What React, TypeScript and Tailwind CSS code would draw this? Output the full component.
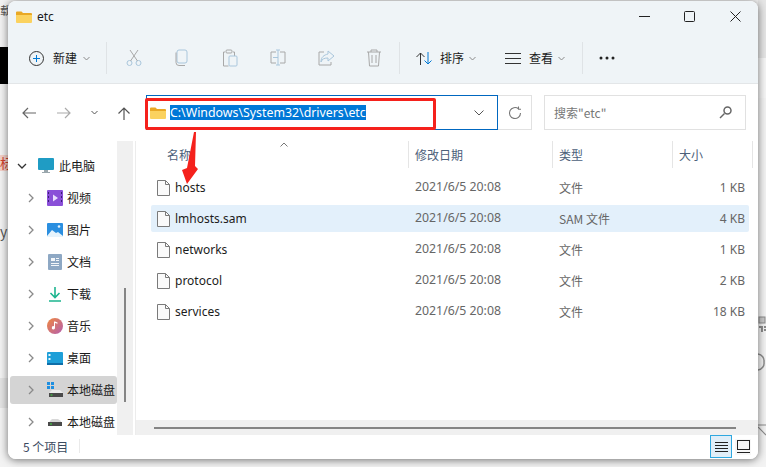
import React from "react";

const font = { fontFamily: '"Noto Sans CJK SC", sans-serif' };
const latin = { fontFamily: '"Noto Sans", sans-serif' };

function FolderIcon({ s = 16 }: { s?: number }) {
  return (
    <svg width={s} height={s} viewBox="0 0 16 16">
      <path d="M0 3.5a1 1 0 0 1 1-1h4.5l1.5 1.5h8a1 1 0 0 1 1 1v1H0z" fill="#e9a825" />
      <path d="M0 6h16v7a1 1 0 0 1-1 1H1a1 1 0 0 1-1-1z" fill="#fbd25f" />
    </svg>
  );
}

function FileIcon() {
  return (
    <svg width="13" height="16" viewBox="0 0 13 16" fill="#fafafa" stroke="#7a7a7a">
      <path d="M.5.5h8l4 4v11H.5z" />
      <path d="M8.5.5v4h4" fill="none" />
    </svg>
  );
}

function Chevron({ open = false }: { open?: boolean }) {
  return (
    <svg width="10" height="10" viewBox="0 0 10 10" fill="none" stroke={open ? "#333" : "#8a8a8a"} strokeWidth="1.3">
      {open ? <path d="M1 3l4 4 4-4" /> : <path d="M3 1l4 4-4 4" />}
    </svg>
  );
}

function Caret() {
  return (
    <svg width="7" height="5" viewBox="0 0 7 5" fill="none" stroke="#8a8a8a">
      <path d="M.5 1l3 3 3-3" />
    </svg>
  );
}

function Sep() {
  return <div className="w-px h-[32px] bg-[#dfe3e6]" />;
}

function ToolIcon({ children }: { children: React.ReactNode }) {
  return (
    <svg width="18" height="18" viewBox="0 0 18 18" fill="none" stroke="#a9c6dc" strokeWidth="1">
      {children}
    </svg>
  );
}

const nav: { label: string; icon: React.ReactNode; active?: boolean }[] = [
  {
    label: "视频",
    icon: (
      <svg width="16" height="16" viewBox="0 0 16 16">
        <rect width="16" height="16" rx="1" fill="#8a4fd8" />
        <path d="M6 4.5l5 3.5-5 3.5z" fill="#e9dcff" />
        <path d="M1 2h1v2H1zM1 6h1v2H1zM1 10h1v2H1zM14 2h1v2h-1zM14 6h1v2h-1zM14 10h1v2h-1z" fill="#3c1d78" />
      </svg>
    ),
  },
  {
    label: "图片",
    icon: (
      <svg width="16" height="16" viewBox="0 0 16 16">
        <rect width="16" height="14" y="1" rx="1" fill="#2b8fe0" />
        <path d="M0 14l5-6 4 3 2-1 5 4v1H0z" fill="#e6f3fc" />
        <circle cx="12" cy="4.5" r="1.3" fill="#e6f3fc" />
      </svg>
    ),
  },
  {
    label: "文档",
    icon: (
      <svg width="14" height="16" viewBox="0 0 14 16">
        <rect width="14" height="16" rx="1" fill="#8ea8c4" />
        <path d="M3 4h4v3H3zM8 4h3v1H8zM8 6h3v1H8zM3 9h8v1H3zM3 11h8v1H3z" fill="#f3f6f9" />
      </svg>
    ),
  },
  {
    label: "下载",
    icon: (
      <svg width="14" height="16" viewBox="0 0 14 16" fill="none" stroke="#1db58f" strokeWidth="1.6">
        <path d="M7 1v10M2.5 7L7 11.5 11.5 7M1 15h12" />
      </svg>
    ),
  },
  {
    label: "音乐",
    icon: (
      <svg width="16" height="16" viewBox="0 0 16 16">
        <defs>
          <linearGradient id="m" x1="0" y1="0" x2="1" y2="1">
            <stop offset="0" stopColor="#f0883e" />
            <stop offset="1" stopColor="#b45fb0" />
          </linearGradient>
        </defs>
        <circle cx="8" cy="8" r="8" fill="url(#m)" />
        <path d="M8 3.5v6.2a1.6 1.6 0 1 1-1-1.4V3.5zM8 3.5l2.5 1v1.3L8 5z" fill="#fff" />
      </svg>
    ),
  },
  {
    label: "桌面",
    icon: (
      <svg width="16" height="13" viewBox="0 0 16 13">
        <rect width="16" height="12" rx="1" fill="#1e9fd8" />
        <rect y="11" width="16" height="2" fill="#0f6ea8" />
        <path d="M1.5 2h2v2h-2zM1.5 6h2v2h-2z" fill="#e6f6fc" />
      </svg>
    ),
  },
  {
    label: "本地磁盘",
    active: true,
    icon: (
      <svg width="16" height="16" viewBox="0 0 16 16">
        <path d="M0 0h3v3H0zM4 0h3v3H4zM0 4h3v3H0zM4 4h3v3H4z" fill="#1f8fe0" />
        <path d="M3 10l2-2h8l3 3v1H2z" fill="#ececec" />
        <rect x="2" y="11" width="14" height="4" fill="#4a4a4a" />
        <rect x="3.5" y="12.5" width="2" height="1" fill="#3fdc3f" />
      </svg>
    ),
  },
  {
    label: "本地磁盘",
    icon: (
      <svg width="16" height="16" viewBox="0 0 16 16">
        <path d="M3 7l2-2h6l3 2v2H2z" fill="#d8d8d8" />
        <rect x="1" y="8" width="14" height="4" fill="#4a4a4a" />
        <rect x="3" y="9.5" width="2" height="1" fill="#3fdc3f" />
      </svg>
    ),
  },
];

const files = [
  { name: "hosts", type: "文件", size: "1 KB" },
  { name: "lmhosts.sam", type: "SAM 文件", size: "4 KB", sel: true },
  { name: "networks", type: "文件", size: "1 KB" },
  { name: "protocol", type: "文件", size: "2 KB" },
  { name: "services", type: "文件", size: "18 KB" },
];

export default function App() {
  return (
    <div className="relative w-[766px] h-[467px] overflow-hidden bg-[#f3f3f3] text-[12px] text-[#1a1a1a]" style={font}>
      {/* backdrop */}
      <div className="absolute left-0 top-[47px] w-[8px] h-[37px] bg-black" />
      <div className="absolute left-0 top-0 text-[11px] text-[#555] leading-[20px]">载</div>
      <div className="absolute left-0 top-[155px] text-[13px] text-[#d0402c] bg-[#f4d0c8] leading-[16px]">标</div>
      <div className="absolute left-0 top-[221px] text-[14px] text-[#555]">y</div>
      <div className="absolute left-0 top-[378px] w-[8px] h-[30px] bg-[#e4e4e4]" />
      <div className="absolute right-0 top-0 w-[8px] h-[58px] bg-[#e6e6e6]" />
      <div className="absolute right-0 top-[58px] w-[8px] h-[40px] bg-[#f6f6f6]" />
      <svg className="absolute left-[758px] top-[315px]" width="8" height="125" viewBox="0 0 8 125" fill="none" stroke="#8b8b8b">
        <rect x="1" y="2" width="6" height="6" fill="#c9c9c9" />
        <path d="M1 12h3v5M6 12h2M6 15h2" strokeWidth="2" />
        <path d="M0 39a7 7 0 0 1 6 8 7 7 0 0 1-6 8" strokeWidth="1.500" />
        <path d="M0 110h8M0 112l8 8" strokeWidth="1.200" />
      </svg>

      {/* window */}
      <div className="absolute left-[8px] top-[1px] w-[750px] h-[458px] rounded-[8px] bg-white shadow-[0_1px_9px_rgba(0,0,0,0.55)] overflow-hidden flex flex-col">
        {/* title + toolbar */}
        <div className="h-[83px] shrink-0 bg-[#eff4f7] border-b border-[#e3e6e8] flex flex-col">
          <div className="h-[32px] flex items-center pl-[8px] pb-[1px]">
            <FolderIcon />
            <span className="ml-[5px] text-[12px]" style={latin}>etc</span>
            <div className="ml-auto flex items-center">
              <svg className="mr-[34px]" width="11" height="11" viewBox="0 0 11 11" stroke="#222"><path d="M0 5.5h11" /></svg>
              <svg className="mr-[35px]" width="11" height="11" viewBox="0 0 11 11" fill="none" stroke="#222"><rect x=".5" y=".5" width="10" height="10" rx="1" /></svg>
              <svg className="mr-[17px]" width="11" height="11" viewBox="0 0 11 11" stroke="#222"><path d="M.5.5l10 10M10.5.5l-10 10" /></svg>
            </div>
          </div>
          <div className="flex items-center h-[50px] pl-[21px]">
            <svg width="15" height="15" viewBox="0 0 15 15" fill="none">
              <circle cx="7.5" cy="7.5" r="7" stroke="#333" />
              <path d="M7.5 4v7M4 7.5h7" stroke="#0078d4" />
            </svg>
            <span className="ml-[9px] mr-[6px]">新建</span>
            <Caret />
            <div className="ml-[16px] mr-[18px]"><Sep /></div>
            <div className="flex items-center gap-[30px]">
              <ToolIcon><circle cx="4.5" cy="14" r="2.5" /><circle cx="13.5" cy="14" r="2.5" /><path d="M5.5 12L13 1M12.5 12L5 1" stroke="#a8a8a8" /></ToolIcon>
              <ToolIcon><rect x="4" y="1" width="10" height="13" rx="2" /><path d="M3 3.5v10a3 3 0 0 0 3 3h6" stroke="#a8a8a8" /></ToolIcon>
              <ToolIcon><path d="M4 3H2.5v14h5M12 3h1.500v4" stroke="#a8a8a8" /><rect x="5" y="1" width="6" height="3" rx="1" stroke="#a8a8a8" /><rect x="8" y="7" width="8" height="10" rx="1" /></ToolIcon>
              <ToolIcon><path d="M7 3H2v11h5M11 3h5v11h-5" stroke="#a8a8a8" /><path d="M9 1v15M7 1h4M7 16h4M4 8.500h5" /></ToolIcon>
              <ToolIcon><path d="M11 2l6 5-6 5V9c-4 0-6 1-7 4 0-5 3-7 7-8z" /><path d="M7 3H2v13h12v-3" stroke="#a8a8a8" /></ToolIcon>
              <ToolIcon><path d="M2 3h14M6 3V1h6v2M3.500 3l1 14h9l1-14M7 6v8M11 6v8" stroke="#a8a8a8" /></ToolIcon>
            </div>
            <div className="ml-[16px] mr-[16px]"><Sep /></div>
            <svg width="17" height="13" viewBox="0 0 17 13" fill="none">
              <path d="M4.500 13V1M.5 5l4-4 4 4" stroke="#333" />
              <path d="M12 0v12M8.500 8.500l3.500 3.500 3.500-3.500" stroke="#0078d4" />
            </svg>
            <span className="ml-[7px] mr-[5px]">排序</span>
            <Caret />
            <svg className="ml-[29px]" width="16" height="11" viewBox="0 0 16 11" stroke="#333"><path d="M0 .5h16M0 5.500h16M0 10.500h16" /></svg>
            <span className="ml-[8px] mr-[5px]">查看</span>
            <Caret />
            <div className="ml-[17px] mr-[16px]"><Sep /></div>
            <svg width="16" height="4" viewBox="0 0 16 4" fill="#222"><circle cx="2" cy="2" r="1.500" /><circle cx="8" cy="2" r="1.500" /><circle cx="14" cy="2" r="1.500" /></svg>
          </div>
        </div>

        {/* address row */}
        <div className="h-[57px] shrink-0 flex items-center relative">
          <div className="flex items-center w-[138px] pl-[13px]">
            <svg width="16" height="14" viewBox="0 0 16 14" fill="none" stroke="#666" strokeWidth="1.200"><path d="M15 7H2M7 2L2 7l5 5" /></svg>
            <svg className="ml-[19px]" width="16" height="14" viewBox="0 0 16 14" fill="none" stroke="#aaa" strokeWidth="1.200"><path d="M1 7h13M9 2l5 5-5 5" /></svg>
            <svg className="ml-[19px]" width="7" height="5" viewBox="0 0 7 5" fill="none" stroke="#555"><path d="M.5 1l3 3 3-3" /></svg>
            <svg className="ml-[19px]" width="14" height="14" viewBox="0 0 14 14" fill="none" stroke="#555" strokeWidth="1.200"><path d="M7 14V2M1.500 7.500L7 2l5.500 5.500" /></svg>
          </div>
          <div className="w-[352px] h-[35px] border border-[#0067c0] flex items-center pl-[3px] pr-[13px]">
            <FolderIcon />
            <span className="ml-[4px] bg-[#0078d7] text-white leading-[15px] text-[12.35px]" style={latin}>C:\Windows\System32\drivers\etc</span>
            <svg className="ml-auto" width="10" height="6" viewBox="0 0 10 6" fill="none" stroke="#555"><path d="M.5.5L5 5 9.500.5" /></svg>
          </div>
          <div className="w-[34px] h-[35px] border border-l-0 border-[#e1e1e1] flex items-center justify-center">
            <svg width="14" height="14" viewBox="0 0 14 14" fill="none" stroke="#777" strokeWidth="1.100"><path d="M12.500 7A5.500 5.500 0 1 1 10.500 2.800M10.500.5v2.800H13" /></svg>
          </div>
          <div className="ml-[12px] w-[202px] h-[35px] border border-[#e1e1e1] flex items-center px-[9px] text-[#777]">
            <span>搜索"etc"</span>
            <svg className="ml-auto mr-[4px]" width="13" height="13" viewBox="0 0 13 13" fill="none" stroke="#666" strokeWidth="1.500"><circle cx="8.500" cy="4.500" r="3.500" /><path d="M5.500 7.500L1 12" /></svg>
          </div>
        </div>

        {/* body */}
        <div className="h-[294px] shrink-0 flex">
          {/* sidebar */}
          <div className="w-[109px] shrink-0 bg-white pt-[9px] overflow-hidden">
            <div className="h-[32px] flex items-center pl-[9px]">
              <Chevron open />
              <svg className="ml-[11px]" width="16" height="16" viewBox="0 0 16 16">
                <rect width="16" height="12" rx="1" fill="#1f9cc4" />
                <path d="M6 12h4v2h2v1H4v-1h2z" fill="#9aa7ad" />
              </svg>
              <span className="ml-[5px]">此电脑</span>
            </div>
            {nav.map((n, i) => (
              <div key={i} className="h-[32px] py-[2px] ml-[2px]">
                <div className={`h-[28px] flex items-center pl-[16px] rounded-[3px] ${n.active ? "bg-[#d4d4d4]" : ""}`}>
                  <Chevron />
                  <div className="ml-[11px] w-[16px] flex justify-center">{n.icon}</div>
                  <span className="ml-[4px] whitespace-nowrap">{n.label}</span>
                </div>
              </div>
            ))}
          </div>
          {/* sidebar scrollbar */}
          <div className="w-[16px] shrink-0 bg-[#f0f0f0] relative">
            <div className="absolute left-[7px] top-[147px] w-[2px] h-[114px] bg-[#858585]" />
          </div>
          <div className="w-[3px] shrink-0 bg-white border-r border-[#ececec]" />
          {/* list */}
          <div className="flex-1 flex flex-col relative">
            <div className="h-[27px] flex items-center text-[#4c607a] relative">
              <span className="absolute left-[31px]">名称</span>
              <svg className="absolute left-[144px] top-[1px]" width="8" height="5" viewBox="0 0 8 5" fill="none" stroke="#777"><path d="M.5 4.500L4 1l3.500 3.500" /></svg>
              <div className="absolute left-[272px] w-px h-[27px] bg-[#e5e5e5]" />
              <span className="absolute left-[279px]">修改日期</span>
              <div className="absolute left-[416px] w-px h-[27px] bg-[#e5e5e5]" />
              <span className="absolute left-[423px]">类型</span>
              <div className="absolute left-[536px] w-px h-[27px] bg-[#e5e5e5]" />
              <span className="absolute left-[543px]">大小</span>
              <div className="absolute left-[616px] w-px h-[27px] bg-[#e5e5e5]" />
            </div>
            <div className="pl-[15px] pt-[6px]">
              {files.map((f) => (
                <div key={f.name} className={`h-[27px] mb-[4px] flex items-center rounded-[2px] w-[598px] ${f.sel ? "bg-[#e3f0fb]" : ""}`}>
                  <div className="ml-[6px]"><FileIcon /></div>
                  <span className="ml-[5px] w-[240px] text-[#1c1c1c]" style={latin}>{f.name}</span>
                  <span className="w-[144px] text-[#666] text-[12.3px]" style={latin}>2021/6/5 20:08</span>
                  <span className="w-[100px] text-[#666]">{f.type}</span>
                  <span className="w-[86px] text-right text-[#666]" style={latin}>{f.size}</span>
                </div>
              ))}
            </div>
            <div className="absolute left-0 right-0 bottom-0 h-[15px] bg-[#f0f0f0] flex items-center pl-[18px]">
              <div className="w-[582px] h-[2px] bg-[#858585]" />
            </div>
          </div>
        </div>

        {/* status */}
        <div className="h-[24px] shrink-0 flex items-center pl-[15px] relative bg-white">
          <span className="text-[#3a4a60]">5 个项目</span>
          <div className="absolute left-[71px] top-[4px] w-px h-[14px] bg-[#eaeaea]" />
          <div className="absolute right-[7px] top-0 flex items-center gap-[3px]">
            <div className="w-[22px] h-[23px] border border-[#2fa8e0] bg-[#e0eef8] flex items-center justify-center">
              <svg width="13" height="10" viewBox="0 0 13 10" stroke="#222"><path d="M0 .5h13M0 3.500h13M0 6.500h13M0 9.500h13" /></svg>
            </div>
            <div className="w-[16px] h-[16px] flex items-center justify-center bg-[#f7f7f7]">
              <svg width="13" height="13" viewBox="0 0 13 13" fill="none" stroke="#222"><rect x=".5" y=".5" width="12" height="9" /><path d="M0 12.500h13" /></svg>
            </div>
          </div>
        </div>
      </div>

      {/* annotations */}
      <div className="absolute left-[145px] top-[98px] w-[291px] h-[32px] border-[3px] border-[#f5211c] rounded-[2px]" />
      <svg className="absolute left-[178px] top-[128px]" width="24" height="60" viewBox="0 0 24 60">
        <path d="M16 4L18 4 17 38 20 41 9 56 4 42 9 40z" fill="#f5211c" />
      </svg>
    </div>
  );
}
